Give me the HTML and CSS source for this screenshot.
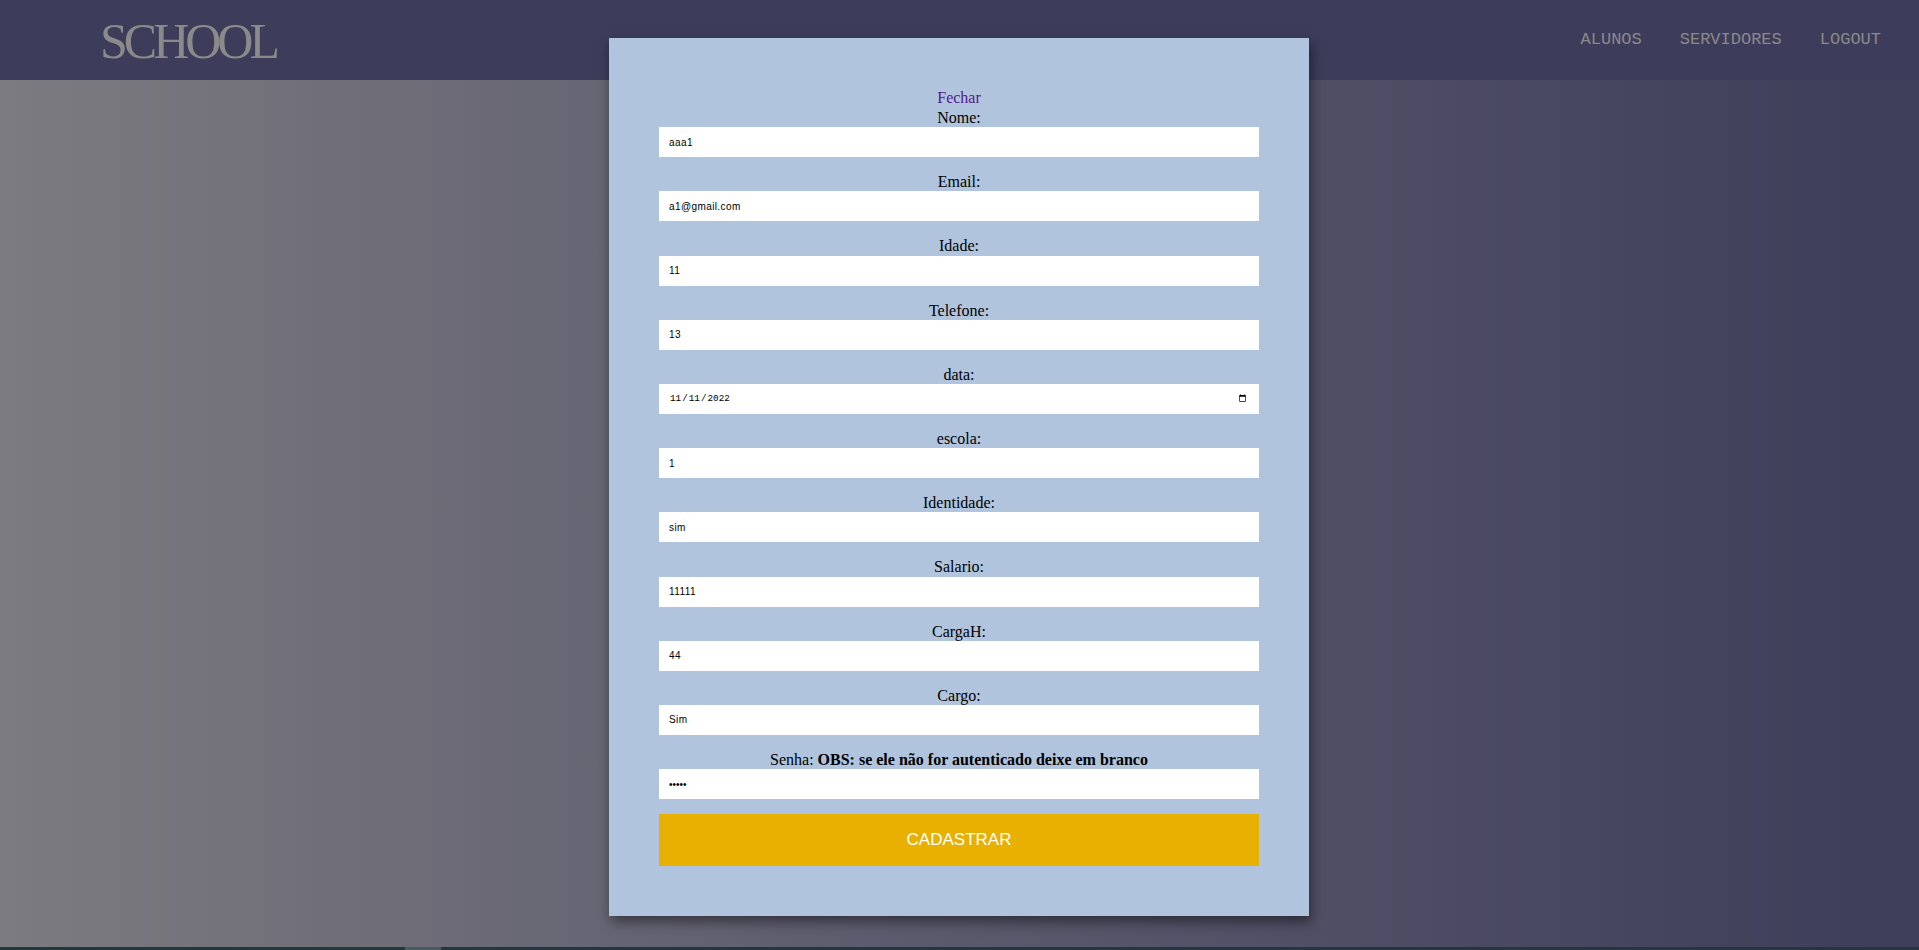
FILE: index.html
```html
<!DOCTYPE html>
<html lang="pt-BR">
<head>
<meta charset="utf-8">
<title>School</title>
<link rel="stylesheet" href="styles.css">
</head>
<body>
<div class="page">
  <header class="topbar">
    <div class="brand">SCHOOL</div>
    <nav class="nav">
      <a class="nav-link" href="#">ALUNOS</a>
      <a class="nav-link" href="#">SERVIDORES</a>
      <a class="nav-link" href="#">LOGOUT</a>
    </nav>
  </header>
  <main class="content"></main>
  <div class="bottom-strip"><div class="strip-thumb"></div></div>
</div>

<div class="modal">
  <a class="close-link" href="#">Fechar</a>
  <form class="form">
    <label class="field-label">Nome:</label>
    <input class="field" type="text" value="aaa1">
    <label class="field-label">Email:</label>
    <input class="field" type="text" value="a1@gmail.com">
    <label class="field-label">Idade:</label>
    <input class="field" type="text" value="11">
    <label class="field-label">Telefone:</label>
    <input class="field" type="text" value="13">
    <label class="field-label">data:</label>
    <input class="field field-date" type="date" value="2022-11-11">
    <label class="field-label">escola:</label>
    <input class="field" type="text" value="1">
    <label class="field-label">Identidade:</label>
    <input class="field" type="text" value="sim">
    <label class="field-label">Salario:</label>
    <input class="field" type="text" value="11111">
    <label class="field-label">CargaH:</label>
    <input class="field" type="text" value="44">
    <label class="field-label">Cargo:</label>
    <input class="field" type="text" value="Sim">
    <label class="field-label">Senha: <b>OBS: se ele não for autenticado deixe em branco</b></label>
    <input class="field field-pass" type="password" value="11111">
    <button class="submit" type="button">CADASTRAR</button>
  </form>
</div>
</body>
</html>
```

FILE: styles.css
```css
* { box-sizing: border-box; }

html, body {
  margin: 0;
  padding: 0;
  height: 950px;
  overflow: hidden;
}

body {
  font-family: "Liberation Serif", "Times New Roman", serif;
  font-size: 16px;
}

.page {
  display: flex;
  flex-direction: column;
  height: 950px;
}

.topbar {
  height: 80px;
  flex: 0 0 80px;
  background: #3d3c5a;
  display: flex;
  align-items: center;
  justify-content: space-between;
  padding: 0 38px 0 100px;
}

.brand {
  font-family: "Liberation Serif", "Times New Roman", serif;
  font-size: 50px;
  letter-spacing: -4px;
  color: #8a8a8a;
  line-height: 1;
  margin-top: 2px;
}

.nav {
  display: flex;
  gap: 38px;
  margin-top: -1px;
}

.nav-link {
  font-family: "Liberation Mono", "Courier New", monospace;
  font-size: 17px;
  color: #8a8a8a;
  text-decoration: none;
}

.content {
  flex: 1;
  background: linear-gradient(to right, #7c7b80 0%, #5d5c6e 45%, #3e3d5a 100%);
}

.bottom-strip {
  flex: 0 0 3px;
  background: #25363f;
  position: relative;
}

.strip-thumb {
  position: absolute;
  left: 405px;
  top: 0;
  width: 36px;
  height: 3px;
  background: #4b5961;
}

.modal {
  position: absolute;
  top: 38px;
  left: 609px;
  width: 700px;
  background: #b0c4de;
  padding: 50px;
  box-shadow: 2px 6px 12px rgba(0, 0, 0, 0.45);
  display: flex;
  flex-direction: column;
  align-items: center;
}

.close-link {
  display: block;
  height: 20px;
  line-height: 20px;
  color: #551a8b;
  text-decoration: none;
  font-size: 16px;
}

.form {
  display: flex;
  flex-direction: column;
  align-items: center;
  width: 600px;
  margin: 0;
}

.field-label {
  display: block;
  height: 19.2px;
  line-height: 19.2px;
  color: #000;
  text-align: center;
}

.field-label b {
  font-weight: bold;
}

.field {
  width: 600px;
  height: 30px;
  border: none;
  outline: none;
  background: #fff;
  margin: 0 0 15px 0;
  padding: 0 10px;
  font-family: "Liberation Sans", Arial, sans-serif;
  font-size: 10px;
  letter-spacing: 0.4px;
  color: #000;
}

.field-date {
  font-family: "Liberation Mono", monospace;
  font-size: 9.3px;
  letter-spacing: 0;
}

.field-pass {
  font-size: 10px;
  letter-spacing: 0;
}

.submit {
  width: 600px;
  height: 52px;
  border: none;
  background: #e8b000;
  color: #fff;
  font-family: "Liberation Sans", Arial, sans-serif;
  font-size: 17px;
  cursor: pointer;
  padding: 0;
}
```
